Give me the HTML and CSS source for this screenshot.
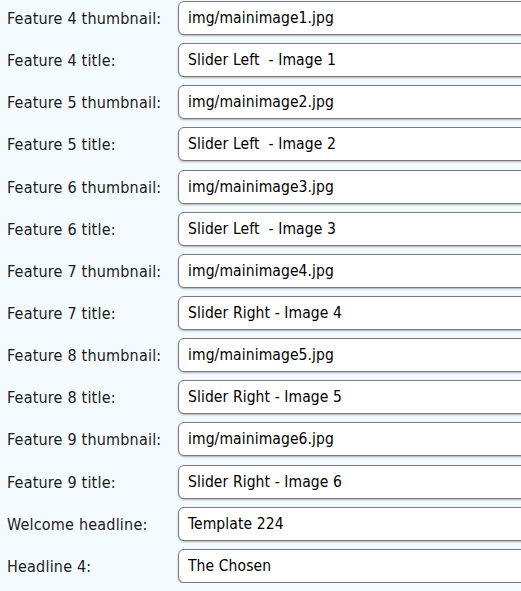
FILE: index.html
```html
<!DOCTYPE html>
<html lang="en">
<head>
	<meta charset="UTF-8" />
	<title>Template settings</title>
	<link rel="stylesheet" href="styles.css">
</head>
<body>
	<!-- settings form start -->
	<form class="settings">
		<label class="lbl" for="f4t">Feature 4 thumbnail:</label>
		<input class="field" id="f4t" type="text" value="img/mainimage1.jpg">
		<label class="lbl" for="f4n">Feature 4 title:</label>
		<input class="field" id="f4n" type="text" value="Slider Left &nbsp;- Image 1">

		<label class="lbl" for="f5t">Feature 5 thumbnail:</label>
		<input class="field" id="f5t" type="text" value="img/mainimage2.jpg">
		<label class="lbl" for="f5n">Feature 5 title:</label>
		<input class="field" id="f5n" type="text" value="Slider Left &nbsp;- Image 2">

		<label class="lbl" for="f6t">Feature 6 thumbnail:</label>
		<input class="field" id="f6t" type="text" value="img/mainimage3.jpg">
		<label class="lbl" for="f6n">Feature 6 title:</label>
		<input class="field" id="f6n" type="text" value="Slider Left &nbsp;- Image 3">

		<label class="lbl" for="f7t">Feature 7 thumbnail:</label>
		<input class="field" id="f7t" type="text" value="img/mainimage4.jpg">
		<label class="lbl" for="f7n">Feature 7 title:</label>
		<input class="field" id="f7n" type="text" value="Slider Right - Image 4">

		<label class="lbl" for="f8t">Feature 8 thumbnail:</label>
		<input class="field" id="f8t" type="text" value="img/mainimage5.jpg">
		<label class="lbl" for="f8n">Feature 8 title:</label>
		<input class="field" id="f8n" type="text" value="Slider Right - Image 5">

		<label class="lbl" for="f9t">Feature 9 thumbnail:</label>
		<input class="field" id="f9t" type="text" value="img/mainimage6.jpg">
		<label class="lbl" for="f9n">Feature 9 title:</label>
		<input class="field" id="f9n" type="text" value="Slider Right - Image 6">

		<label class="lbl" for="wh">Welcome headline:</label>
		<input class="field" id="wh" type="text" value="Template 224">
		<label class="lbl" for="h4">Headline 4:</label>
		<input class="field" id="h4" type="text" value="The Chosen">
	</form>
	<!-- settings form end -->
</body>
</html>
```

FILE: styles.css
```css
*{
	margin:0;
	padding:0;
	box-sizing:border-box;
}
html,body{
	background:#f4fbfe;
}
body{
	overflow:hidden;
	font-family:"DejaVu Sans Condensed","DejaVu Sans",sans-serif;
	font-size:15px;
	color:#111;
}
.settings{
	display:grid;
	grid-template-columns:171px 360px;
	grid-auto-rows:34px;
	row-gap:8.15px;
	padding:1px 0 0 7px;
}
.lbl{
	display:flex;
	align-items:center;
	padding-top:1px;
	font-size:16px;
	letter-spacing:0.2px;
	color:#1a1a1a;
	white-space:nowrap;
}
.field{
	width:100%;
	height:34px;
	padding:0 9px;
	border:1px solid #7b7b7b;
	border-radius:6px;
	background:#fff;
	box-shadow:0 1px 2px rgba(0,0,0,0.3);
	font-family:inherit;
	font-size:15.5px;
	letter-spacing:0.1px;
	color:#000;
	outline:none;
}
```
